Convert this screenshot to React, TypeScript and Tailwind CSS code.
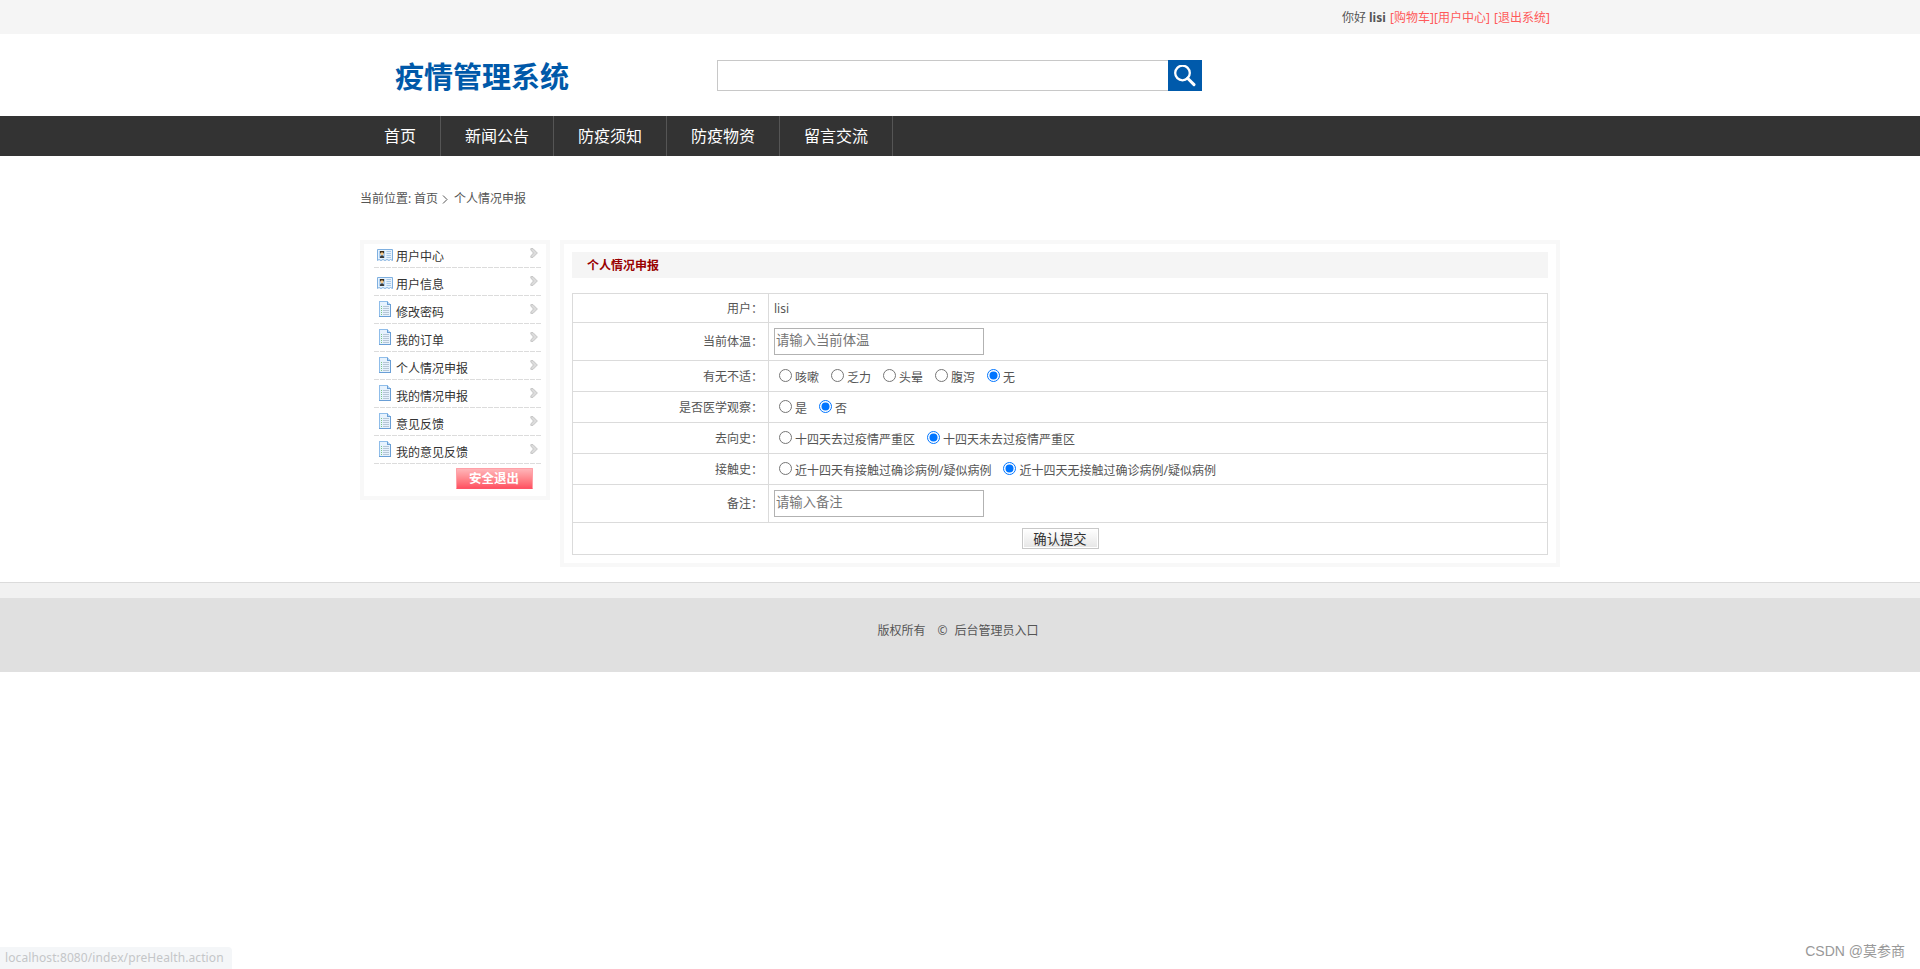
import React from "react";
import type { ReactNode } from "react";

const navItems = ["首页", "新闻公告", "防疫须知", "防疫物资", "留言交流"];

const menu: { label: string; icon: "card" | "doc" }[] = [
  { label: "用户中心", icon: "card" },
  { label: "用户信息", icon: "card" },
  { label: "修改密码", icon: "doc" },
  { label: "我的订单", icon: "doc" },
  { label: "个人情况申报", icon: "doc" },
  { label: "我的情况申报", icon: "doc" },
  { label: "意见反馈", icon: "doc" },
  { label: "我的意见反馈", icon: "doc" },
];

function CardIcon() {
  return (
    <svg width="16" height="16" viewBox="0 0 16 16">
      <path d="M0.5 2.5h15v11l-2-1-1.5 1-2-1-2 1-2-1-2 1-2-1-1.5 1z" fill="#e6f2fd" stroke="#7fb0e0" />
      <rect x="2" y="4" width="6" height="7" fill="#a9cdf0" />
      <path d="M3 4h4v2.5H3z" fill="#3c2c18" />
      <circle cx="5" cy="6.8" r="1.6" fill="#f6c98a" />
      <path d="M3 10.2c0-1 .8-1.6 2-1.6s2 .6 2 1.6v.8H3z" fill="#3a3a3a" />
      <path d="M9.5 4.5H14M9.5 6.5H14M9.5 8.5H14M9.5 10.5H14" stroke="#a9c8e6" />
    </svg>
  );
}

function DocIcon() {
  return (
    <svg width="16" height="16" viewBox="0 0 16 16" shapeRendering="crispEdges">
      <path d="M2.5 0.5h8l3 3v12h-11z" fill="#e6f2fd" stroke="#8fbdea" />
      <path d="M2 15.5h12M13.5 4v12" stroke="#6a9fd6" />
      <path d="M10.5 0.5v3h3" fill="#b8d6f3" stroke="#6a9fd6" />
      <path d="M4 5.5h1M4 7.5h1M4 9.5h1M4 11.5h1M4 13.5h1" stroke="#7cc886" />
      <path d="M6 5.5h6M6 7.5h6M6 9.5h6M6 11.5h6M6 13.5h6" stroke="#b6c6d6" />
    </svg>
  );
}

function Arrow() {
  return (
    <svg width="8" height="10" viewBox="0 0 8 10">
      <path d="M0.8 0.6h2.2L7.4 5L3 9.4H0.8V8L3.4 5L0.8 2z" fill="#dcdcdc" stroke="#b8b8b8" strokeWidth="0.7" />
    </svg>
  );
}

function Radio({ label, checked }: { label: string; checked?: boolean }) {
  return (
    <span className="mr-3 flex items-center">
      <svg className="-mt-[5px] mr-[3px]" width="13" height="13" viewBox="0 0 13 13">
        <circle cx="6.5" cy="6.5" r="6" fill="#fff" stroke={checked ? "#0075ff" : "#767676"} />
        {checked && <circle cx="6.5" cy="6.5" r="4" fill="#0075ff" />}
      </svg>
      {label}
    </span>
  );
}

function Row({ label, h, children }: { label: string; h: string; children: ReactNode }) {
  return (
    <div className={`flex border-b border-[#dbdbdb] ${h}`}>
      <div className="flex w-[196px] items-center justify-end border-r border-[#dbdbdb] pr-[5px] pt-px">{label}：</div>
      <div className="flex flex-1 items-center pl-[5px]">{children}</div>
    </div>
  );
}

function TextField({ placeholder }: { placeholder: string }) {
  return (
    <input
      placeholder={placeholder}
      className="h-[27px] w-[210px] border border-[#b2b2b2] bg-white pb-[3px] pl-px text-[13.33px] placeholder:text-[#757575]"
    />
  );
}

export default function App() {
  return (
    <div className="relative h-[969px] w-[1920px] overflow-hidden bg-white font-['Noto_Sans','Noto_Sans_CJK_SC',sans-serif] text-[12px] leading-[18px] text-[#555]">
      <div className="h-[34px] bg-[#f5f5f5]">
        <div className="mx-auto flex h-full w-[1200px] items-center justify-end whitespace-pre pr-[11px] pt-[2px]">
          <span className="w-[27px]">你好</span>
          <b className="w-[21px]">lisi</b>
          <a className="w-[44px] text-[#ff5a5a]">[购物车]</a>
          <a className="w-[60px] text-[#ff5a5a]">[用户中心]</a>
          <a className="w-[55px] text-[#ff5a5a]">[退出系统]</a>
        </div>
      </div>

      <header className="mx-auto flex h-[82px] w-[1200px] items-start">
        <h1 className="w-[357px] pl-[35px] pt-[23px] text-[29px] font-bold leading-[40px] text-[#0059a9]">疫情管理系统</h1>
        <div className="flex pt-[26px]">
          <input className="h-[31px] w-[451px] border border-r-0 border-[#c8c8c8]" />
          <button className="flex h-[31px] w-[34px] items-start bg-[#005aab] pl-[6px] pt-[5px]">
            <svg width="22" height="22" viewBox="0 0 22 22" fill="none" stroke="#fff">
              <circle cx="8.5" cy="8" r="7.3" strokeWidth="2.3" />
              <path d="M13.6 13.2l6.4 6.4" strokeWidth="3" strokeLinecap="round" />
            </svg>
          </button>
        </div>
      </header>

      <nav className="h-10 bg-[#333]">
        <div className="mx-auto flex h-full w-[1200px] text-base text-white">
          {navItems.map((n) => (
            <a key={n} className="flex items-center border-r border-[#555] px-6">{n}</a>
          ))}
        </div>
      </nav>

      <div className="mx-auto flex h-[84px] w-[1200px] items-start pt-[34px]">
        <span className="w-[54px]">当前位置:</span>
        <span className="w-[28px]">首页</span>
        <svg className="mt-[5px] mr-[6px]" width="6" height="9" viewBox="0 0 6 9" fill="none" stroke="#555">
          <path d="M1 0.5l4 4l-4 4" />
        </svg>
        <span>个人情况申报</span>
      </div>

      <main className="mx-auto flex h-[342px] w-[1200px] items-start gap-[10px]">
        <aside className="h-[260px] w-[190px] border-4 border-[#f8f8f8] pl-[10px]">
          {menu.map((m, i) => (
            <div key={m.label} className={`relative flex w-[167px] ${i === 0 ? "h-6" : "h-7"}`}>
              <span className={`ml-[3px] mr-[3px] ${i === 0 ? "pt-[3px]" : m.icon === "card" ? "pt-[7px]" : "pt-[5px]"}`}>
                {m.icon === "card" ? <CardIcon /> : <DocIcon />}
              </span>
              <span className={`flex-1 text-[#333] ${i === 0 ? "pt-[4px]" : "pt-[8px]"}`}>{m.label}</span>
              <span className={`mr-[3px] ${i === 0 ? "pt-[4px]" : "pt-[8px]"}`}><Arrow /></span>
              <svg className="absolute bottom-0 left-0" width="167" height="1">
                <path d="M0 0.5h167" stroke="#dcdcdc" strokeDasharray="5 1" />
              </svg>
            </div>
          ))}
          <button className="ml-[82px] mt-[4px] flex h-[21px] w-[77px] items-center justify-center rounded-[1px] border border-[#ffa0a8] border-b-[#ff5566] bg-linear-to-b from-[#ffb4b8] to-[#ff5163] pr-px text-[12.5px] font-bold text-white">
            安全退出
          </button>
        </aside>

        <section className="h-[327px] w-[1000px] border-4 border-[#f8f8f8] p-2">
          <h2 className="flex h-[26px] items-center bg-[#f5f5f5] pl-[15px] pt-[2px] font-bold text-[#990000]">个人情况申报</h2>
          <div className="mt-[15px] border border-b-0 border-[#dbdbdb]">
            <Row label="用户" h="h-[29px]"><span className="pt-px">lisi</span></Row>
            <Row label="当前体温" h="h-[38px]"><TextField placeholder="请输入当前体温" /></Row>
            <Row label="有无不适" h="h-[31px]">
              <div className="flex pl-[5px] pt-[3px]">
                <Radio label="咳嗽" /><Radio label="乏力" /><Radio label="头晕" /><Radio label="腹泻" /><Radio label="无" checked />
              </div>
            </Row>
            <Row label="是否医学观察" h="h-[31px]">
              <div className="flex pl-[5px] pt-[3px]"><Radio label="是" /><Radio label="否" checked /></div>
            </Row>
            <Row label="去向史" h="h-[31px]">
              <div className="flex pl-[5px] pt-[3px]">
                <Radio label="十四天去过疫情严重区" /><Radio label="十四天未去过疫情严重区" checked />
              </div>
            </Row>
            <Row label="接触史" h="h-[31px]">
              <div className="flex pl-[5px] pt-[3px]">
                <Radio label="近十四天有接触过确诊病例/疑似病例" /><Radio label="近十四天无接触过确诊病例/疑似病例" checked />
              </div>
            </Row>
            <Row label="备注" h="h-[38px]"><TextField placeholder="请输入备注" /></Row>
            <div className="flex h-[32px] items-center justify-center border-b border-[#dbdbdb]">
              <button className="flex h-[21px] w-[77px] items-center justify-center border border-[#c8c8c8] bg-linear-to-b from-white to-[#e6e6e6] text-[13.33px] text-[#333] shadow-[inset_0_0_0_1px_#fff]">
                确认提交
              </button>
            </div>
          </div>
        </section>
      </main>

      <footer className="border-t border-[#dbdbdb]">
        <div className="h-[15px] bg-[#f1f1f1]" />
        <div className="flex h-[74px] items-start justify-center bg-[#e0e0e0] pr-[4px] pt-[24px]">
          <span className="mr-[12px]">版权所有</span>
          <span className="mr-[7px]">©</span>
          <span>后台管理员入口</span>
        </div>
      </footer>

      <div className="absolute bottom-0 left-0 flex h-[22px] w-[232px] items-center rounded-tr bg-[#f4f6f8] pl-[5px] tracking-[0.1px] text-[#c4c6c8]">
        localhost:8080/index/preHealth.action
      </div>
      <div className="absolute bottom-[9px] right-[15px] font-['Liberation_Sans','Noto_Sans_CJK_SC',sans-serif] text-[14px] text-[#999]">
        CSDN @莫参商
      </div>
    </div>
  );
}
